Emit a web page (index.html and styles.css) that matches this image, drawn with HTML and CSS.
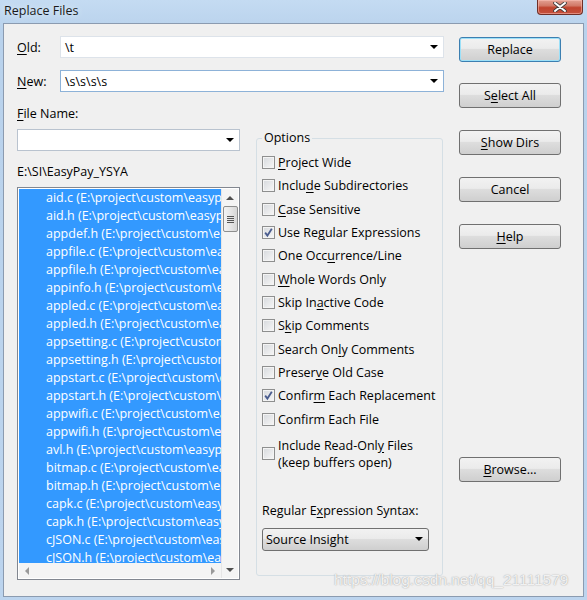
FILE: index.html
```html
<!DOCTYPE html>
<html>
<head>
<meta charset="utf-8">
<link rel="stylesheet" href="styles.css">
</head>
<body>
<div class="window">
  <div class="titlebar">
    <span class="title">Replace Files</span>
    <div class="close"><svg width="14" height="10" viewBox="0 0 14 10"><path d="M2 1 L12 9 M12 1 L2 9" stroke="#3a3a3a" stroke-width="3.6" stroke-linecap="round"/><path d="M2 1 L12 9 M12 1 L2 9" stroke="#fff" stroke-width="2" stroke-linecap="round"/></svg></div>
  </div>
  <div class="client">
    <div class="main">
      <div class="row">
        <span class="lbl"><u>O</u>ld:</span>
        <div class="combo"><span class="val">\t</span><span class="arrow"></span></div>
      </div>
      <div class="row row2">
        <span class="lbl"><u>N</u>ew:</span>
        <div class="combo combo-hot"><span class="val">\s\s\s\s</span><span class="arrow"></span></div>
      </div>
      <div class="lower">
        <div class="leftcol">
          <div class="text fn"><u>F</u>ile Name:</div>
          <div class="combo small"><span class="val"> </span><span class="arrow"></span></div>
          <div class="text path">E:\SI\EasyPay_YSYA</div>
          <div class="listbox">
            <div class="items">
              <div class="item">aid.c (E:\project\custom\easypay\src\aid.c)</div>
              <div class="item">aid.h (E:\project\custom\easypay\inc\aid.h)</div>
              <div class="item">appdef.h (E:\project\custom\easypay\inc)</div>
              <div class="item">appfile.c (E:\project\custom\easypay\src)</div>
              <div class="item">appfile.h (E:\project\custom\easypay\inc)</div>
              <div class="item">appinfo.h (E:\project\custom\easypay\inc)</div>
              <div class="item">appled.c (E:\project\custom\easypay\src)</div>
              <div class="item">appled.h (E:\project\custom\easypay\inc)</div>
              <div class="item">appsetting.c (E:\project\custom\easypay)</div>
              <div class="item">appsetting.h (E:\project\custom\easypay)</div>
              <div class="item">appstart.c (E:\project\custom\easypay)</div>
              <div class="item">appstart.h (E:\project\custom\easypay)</div>
              <div class="item">appwifi.c (E:\project\custom\easypay)</div>
              <div class="item">appwifi.h (E:\project\custom\easypay)</div>
              <div class="item">avl.h (E:\project\custom\easypay\inc)</div>
              <div class="item">bitmap.c (E:\project\custom\easypay)</div>
              <div class="item">bitmap.h (E:\project\custom\easypay)</div>
              <div class="item">capk.c (E:\project\custom\easypay\src)</div>
              <div class="item">capk.h (E:\project\custom\easypay\inc)</div>
              <div class="item">cJSON.c (E:\project\custom\easypay)</div>
              <div class="item">cJSON.h (E:\project\custom\easypay)</div>
            </div>
            <div class="vscroll">
              <span class="sarrow up"></span>
              <div class="thumb"><i></i><i></i><i></i><i></i></div>
              <span class="vspace"></span>
              <span class="sarrow down"></span>
            </div>
            <div class="hscroll">
              <span class="sarrow left"></span>
              <span class="sarrow right"></span>
            </div>
          </div>
        </div>
        <fieldset class="options">
          <legend>Options</legend>
          <div class="checks">
            <div class="chk"><span class="box"></span><span><u>P</u>roject Wide</span></div>
            <div class="chk"><span class="box"></span><span>Inclu<u>d</u>e Subdirectories</span></div>
            <div class="chk"><span class="box"></span><span><u>C</u>ase Sensitive</span></div>
            <div class="chk"><span class="box on"><svg width="11" height="11" viewBox="0 0 11 11"><path d="M2.2 5.6 L4.4 8.6 L8.8 1.8" fill="none" stroke="#4a5c8e" stroke-width="1.8"/></svg></span><span>Use Re<u>g</u>ular Expressions</span></div>
            <div class="chk"><span class="box"></span><span>One Occ<u>u</u>rrence/Line</span></div>
            <div class="chk"><span class="box"></span><span><u>W</u>hole Words Only</span></div>
            <div class="chk"><span class="box"></span><span>Skip In<u>a</u>ctive Code</span></div>
            <div class="chk"><span class="box"></span><span>S<u>k</u>ip Comments</span></div>
            <div class="chk"><span class="box"></span><span>Search On<u>l</u>y Comments</span></div>
            <div class="chk"><span class="box"></span><span>Preser<u>v</u>e Old Case</span></div>
            <div class="chk"><span class="box on"><svg width="11" height="11" viewBox="0 0 11 11"><path d="M2.2 5.6 L4.4 8.6 L8.8 1.8" fill="none" stroke="#4a5c8e" stroke-width="1.8"/></svg></span><span>Confir<u>m</u> Each Replacement</span></div>
            <div class="chk"><span class="box"></span><span>Conf<u>i</u>rm Each File</span></div>
            <div class="chk two"><span class="box"></span><span>Include Read-Onl<u>y</u> Files<br>(keep buffers open)</span></div>
          </div>
          <div class="text rxlbl">Regular E<u>x</u>pression Syntax:</div>
          <div class="dropbtn"><span>Source Insight</span><span class="arrow"></span></div>
        </fieldset>
      </div>
    </div>
    <div class="buttons">
      <div class="btn default">Replace</div>
      <div class="btn b2">S<u>e</u>lect All</div>
      <div class="btn b3"><u>S</u>how Dirs</div>
      <div class="btn b3">Cancel</div>
      <div class="btn b3"><u>H</u>elp</div>
      <div class="btn browse"><u>B</u>rowse...</div>
    </div>
    <div class="watermark">https://blog.csdn.net/qq_21111579</div>
  </div>
</div>
</body>
</html>
```
FILE: styles.css
```css
* { box-sizing: border-box; }
body {
  margin: 0;
  font-family: "Open Sans", "Noto Sans", sans-serif;
  font-size: 12.5px;
  color: #000;
}
u { text-decoration: underline; text-underline-offset: 2px; }
.window {
  width: 587px;
  height: 600px;
  background: linear-gradient(#c4dbf2, #b9d2ec 30px, #bcd4ee);
  padding: 0 3px 3px 3px;
  display: flex;
  flex-direction: column;
}
.titlebar {
  height: 23px;
  display: flex;
  justify-content: space-between;
  align-items: flex-start;
}
.title {
  margin-top: 2px;
  margin-left: 1px;
  font-size: 12.5px;
  color: #1a1a1a;
  text-shadow: 0 0 6px #e8f2fc;
}
.close {
  width: 46px;
  height: 15px;
  margin-right: 1px;
  border: 1px solid #6f2f27;
  border-top: none;
  border-radius: 0 0 4px 4px;
  background: linear-gradient(#e3a193 0%, #d27a68 40%, #c0442e 55%, #c5523e 100%);
  box-shadow: inset 0 0 0 1px rgba(255,200,190,0.5);
  display: flex;
  align-items: center;
  justify-content: center;
}
.client {
  position: relative;
  flex: 1;
  background: #f0f0f0;
  border: 1px solid #8b9bb0;
  display: flex;
  align-items: flex-start;
}
.main {
  width: 427px;
  margin-left: 13px;
  margin-top: 12px;
}
.row {
  display: flex;
  align-items: center;
  height: 22px;
}
.row2 { margin-top: 12px; }
.lbl { width: 43px; }
.combo {
  width: 384px;
  height: 22px;
  background: #fff;
  border: 1px solid #dde3ea;
  display: flex;
  align-items: center;
  justify-content: space-between;
  padding: 0 4px 0 4px;
}
.combo-hot { border-color: #8db2d8; }
.combo.small { width: 223px; margin-top: 7px; border-color: #b9c3cf; }
.val { white-space: pre; }
.arrow {
  width: 0; height: 0;
  border-left: 4px solid transparent;
  border-right: 4px solid transparent;
  border-top: 4px solid #000;
  margin-right: 1px;
}
.lower { display: flex; align-items: flex-start; }
.leftcol { width: 223px; }
.text { line-height: 16px; height: 16px; }
.fn { margin-top: 14px; }
.path { margin-top: 13px; }
.listbox {
  margin-top: 7px;
  width: 223px;
  height: 393px;
  border: 1px solid #828790;
  background: #fff;
  padding: 1px;
  display: grid;
  grid-template-columns: 1fr 17px;
  grid-template-rows: 1fr 15px;
}
.items {
  background: #3399ff;
  overflow: hidden;
  grid-column: 1;
  grid-row: 1;
}
.item {
  height: 18px;
  line-height: 18px;
  padding-left: 27px;
  white-space: nowrap;
  color: #fff;
}
.vscroll {
  grid-column: 2;
  grid-row: 1 / 3;
  background: #f4f4f4;
  border-left: 1px solid #e6e6e6;
  display: flex;
  flex-direction: column;
  align-items: center;
}
.hscroll {
  grid-column: 1;
  grid-row: 2;
  background: #f4f4f4;
  display: flex;
  justify-content: space-between;
  align-items: center;
  padding: 0 6px;
}
.sarrow { width: 0; height: 0; }
.up {
  margin-top: 7px;
  border-left: 4px solid transparent;
  border-right: 4px solid transparent;
  border-bottom: 4px solid #505050;
}
.down {
  margin-bottom: 6px;
  border-left: 4px solid transparent;
  border-right: 4px solid transparent;
  border-top: 4px solid #505050;
}
.left {
  border-top: 4px solid transparent;
  border-bottom: 4px solid transparent;
  border-right: 4px solid #9a9a9a;
}
.right {
  border-top: 4px solid transparent;
  border-bottom: 4px solid transparent;
  border-left: 4px solid #9a9a9a;
}
.thumb {
  margin-top: 6px;
  width: 15px;
  height: 26px;
  border: 1px solid #8e8f8f;
  border-radius: 2px;
  background: linear-gradient(90deg, #f3f3f3, #e6e6e6 50%, #d6d6d6);
  display: flex;
  flex-direction: column;
  align-items: center;
  justify-content: center;
  gap: 1px;
}
.thumb i {
  display: block;
  width: 7px;
  height: 1px;
  background: #555;
}
.vspace { flex: 1; }
.options {
  margin: 38px 0 0 16px;
  width: 187px;
  height: 446px;
  border: 1px solid #d5dfe5;
  border-radius: 3px;
  padding: 0 0 0 5px;
  min-width: 0;
}
.options legend {
  padding: 0 2px;
  line-height: 16px;
}
.checks { margin-top: 5px; }
.chk {
  height: 23.33px;
  display: flex;
  align-items: center;
  white-space: nowrap;
}
.chk.two {
  margin-top: 6px;
  height: 34px;
  line-height: 17px;
}
.box {
  width: 13px;
  height: 13px;
  border: 1px solid #8e8f8f;
  background: linear-gradient(135deg, #d6d9dd, #f7f7f7);
  box-shadow: inset 0 0 0 1px #f4f4f4;
  margin-right: 3px;
  flex: none;
  display: flex;
  align-items: center;
  justify-content: center;
}
.box svg { display: block; }
.rxlbl { margin-top: 32px; }
.dropbtn {
  margin-top: 9px;
  width: 167px;
  height: 23px;
  border: 1px solid #707070;
  border-radius: 3px;
  background: linear-gradient(#f2f2f2 0%, #ebebeb 45%, #dddddd 50%, #cfcfcf 100%);
  display: flex;
  align-items: center;
  justify-content: space-between;
  padding: 0 4px 0 3px;
}
.buttons {
  width: 102px;
  margin-left: 15px;
  margin-top: 13px;
  display: flex;
  flex-direction: column;
}
.btn {
  height: 25px;
  border: 1px solid #707070;
  border-radius: 3px;
  background: linear-gradient(#f2f2f2 0%, #ebebeb 45%, #dddddd 50%, #cfcfcf 100%);
  display: flex;
  align-items: center;
  justify-content: center;
}
.btn.default {
  border-color: #3c7fb1;
  box-shadow: inset 0 0 0 1px #9ce0f8;
}
.b2 { margin-top: 21px; }
.b3 { margin-top: 22px; }
.browse { margin-top: 208px; }
.watermark {
  position: absolute;
  left: 330px;
  top: 547px;
  font-family: "Liberation Sans", Arial, sans-serif;
  font-size: 15.5px;
  color: rgba(255,255,255,0.85);
  text-shadow: 0 0 1px #a0a0a0, 0 0 2px #c8c8c8;
  white-space: nowrap;
}
```
